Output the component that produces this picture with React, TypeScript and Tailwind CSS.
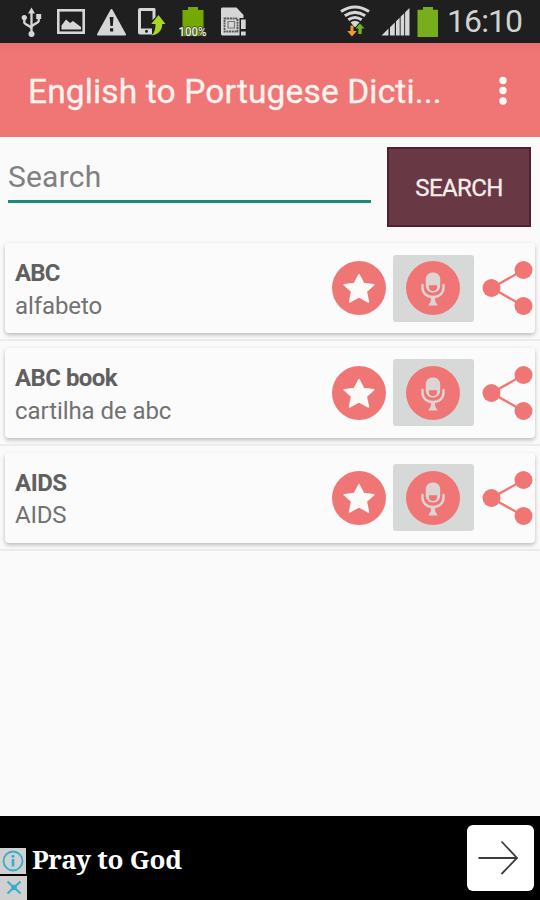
import React from "react";

const entries = [
  { word: "ABC", meaning: "alfabeto", wordCls: "tracking-[-0.9px]", meaningCls: "tracking-[-0.1px]" },
  { word: "ABC book", meaning: "cartilha de abc", wordCls: "tracking-[-0.55px]", meaningCls: "tracking-[-0.07px]" },
  { word: "AIDS", meaning: "AIDS", wordCls: "tracking-[-0.5px]", meaningCls: "tracking-[-0.2px]" },
];

function StatusBar() {
  return (
    <div className="flex h-[43px] shrink-0 bg-[#1e1f1e]">
      <svg width="446" height="43" viewBox="0 0 446 43" className="shrink-0">
        {/* usb */}
        <g stroke="#d6d6d6" strokeWidth="2.300" fill="none">
          <path d="M31.500 12v21M24.300 18v4.500c0 2.500 7.200 3 7.200 6.500M38.700 18v3c0 2.500-7.200 3-7.200 6.500" />
        </g>
        <path d="M31.500 7.500l3.500 6h-7z" fill="#d6d6d6" />
        <circle cx="31.500" cy="34" r="3" fill="#d6d6d6" />
        <circle cx="24.300" cy="17.500" r="2.600" fill="#d6d6d6" />
        <path d="M36.200 14h5v5h-5z" fill="#d6d6d6" />
        {/* picture */}
        <rect x="58.300" y="10.300" width="25.400" height="22.400" fill="none" stroke="#d6d6d6" strokeWidth="2.600" />
        <path d="M61.500 29.500v-4l4.500-6 4 3.500 3-2 8 6v2.500z" fill="#d6d6d6" />
        {/* warning */}
        <path d="M111.500 10l13.500 24.500H98z" fill="#d6d6d6" stroke="#d6d6d6" strokeWidth="2" strokeLinejoin="round" />
        <path d="M109.700 17h3.800l-.7 9h-2.400zM110 28.300h3.200v3.200H110z" fill="#1e1f1e" />
        {/* phone with arrow */}
        <path d="M155.500 17V9.500c0-1-.5-1.500-1.500-1.500H140c-1 0-2 .8-2 2v22.500c0 1.200.8 2 2 2h12v-6h-11V11h11.500v9z" fill="#d6d6d6" />
        <circle cx="146.500" cy="31.300" r="1.500" fill="#1e1f1e" />
        <path d="M158.500 15l7 9h-3.300c0 6.500-4 10.500-10.700 11.500 3-3 4-6.500 4-11.500h-4.300z" fill="#a6d81c" />
        {/* battery with level */}
        <path d="M188 7h10v3h5.500v26h-21V10h5.500z" fill="#76a900" />
        <text x="178.500" y="35.500" textLength="28" lengthAdjust="spacingAndGlyphs" fontFamily="Roboto, sans-serif" fontSize="12" fontWeight="500" fill="#eeeeee" stroke="#35421c" strokeWidth="1.500" paintOrder="stroke">100%</text>
        {/* sim card alert */}
        <path d="M223 7.500h13.500l7 7.500v3.500h-3.500v12h3.500v5h-3.500H223c-1.500 0-2-.5-2-2v-24c0-1.500.5-2 2-2z" fill="#d6d6d6" />
        <path d="M224.500 18.500h13v13h-13z" fill="none" stroke="#555" strokeWidth="1.800" strokeDasharray="2 .7" />
        <path d="M228 21.500h6.500v6.500H228z" fill="none" stroke="#777" strokeWidth="1.200" />
        <path d="M239.500 18h7.500v19h-7.500z" fill="#1e1f1e" />
        <path d="M241 19.500h4.700v9.500H241zM241 31.500h4.700v4H241z" fill="#d6d6d6" />
        {/* wifi */}
        <g fill="none" stroke="#d6d6d6" strokeWidth="3">
          <path d="M341 11.500q14-9 28 0M344.800 15.800q10.200-6.800 20.400 0M348.300 19.800q6.700-4.700 13.400 0" />
        </g>
        <path d="M350.500 22.300q4.500-3 9 0L355.500 27h-1z" fill="#d6d6d6" />
        <path d="M350.500 25.500h3v5.500h3.300l-4.800 5.500-4.800-5.500h3.300z" fill="#ef9a32" />
        <path d="M360 23.500l4.500 5h-2.800v5.500h-3.400V28.500h-2.800z" fill="#6db51d" />
        {/* signal */}
        <path d="M381.500 35.500l7-7v7zM390 27.300l4.800-4.800v13H390zM396 21.300l3.700-3.600v17.800H396zM400.600 16.800l3.600-3.600v22.300h-3.600zM405.100 12.300l4.400-4.200v27.400h-4.400z" fill="#d6d6d6" />
        {/* battery */}
        <path d="M423 7h10v2.800h5V37h-20.500V9.800h5.500z" fill="#78ad1c" />
      </svg>
      <span className="mt-[2px] ml-[1px] whitespace-nowrap text-[32px] leading-[38px] tracking-[-0.9px] text-[#d2d2d2]">16:10</span>
    </div>
  );
}

function StarBadge() {
  return (
    <svg width="54" height="54" viewBox="0 0 54 54" className="shrink-0">
      <circle cx="27" cy="27" r="27" fill="#f07675" />
      <path d="M27 13.500l4.600 8.900 10.200 1.300-7.500 6.800 2.200 10.500-9.500-5.200-9.500 5.200 2.200-10.500-7.500-6.800 10.200-1.300z" fill="#fcf9f9" stroke="#fcf9f9" strokeWidth="1.500" strokeLinejoin="round" />
    </svg>
  );
}

function MicButton() {
  return (
    <div className="ml-[7px] flex h-[67px] w-[81px] shrink-0 items-center justify-center rounded-[3px] bg-[#d7d9d8]">
      <svg width="54" height="54" viewBox="0 0 54 54" className="mr-px">
        <circle cx="27" cy="27" r="27" fill="#f07675" />
        <rect x="19.800" y="11.500" width="14.400" height="20" rx="6.500" fill="#dcd5d3" />
        <path d="M22.900 24.300h8.200v1.700c0 2.500-1.500 4-4.100 4s-4.100-1.500-4.100-4z" fill="#ee7574" />
        <path d="M16.500 24v2.500c0 5.500 4 9.500 10.500 9.500s10.500-4 10.500-9.500V24" fill="none" stroke="#dcd5d3" strokeWidth="2.400" strokeLinecap="round" />
        <path d="M24.900 36h4.200v4l2.500 4.500h-9.200l2.500-4.500z" fill="#dcd5d3" />
      </svg>
    </div>
  );
}

function ShareIcon() {
  return (
    <svg width="51" height="54" viewBox="0 0 51 54" className="ml-[8px] shrink-0">
      <path d="M41.500 9L9.500 27l32 18" fill="none" stroke="#f07675" strokeWidth="2.300" />
      <circle cx="41.500" cy="9" r="9" fill="#f07675" />
      <circle cx="9.500" cy="27" r="9" fill="#f07675" />
      <circle cx="41.500" cy="45" r="9" fill="#f07675" />
    </svg>
  );
}

export default function App() {
  return (
    <div className="flex h-[900px] w-[540px] flex-col overflow-hidden bg-[#fafafa] font-[Roboto,sans-serif]">
      <StatusBar />
      <header className="flex h-[94px] shrink-0 items-center justify-between bg-linear-to-b from-[#e97172] to-[#f07675] to-[12px] pr-[32px] pl-[28px]">
        <h1 className="mt-[3px] whitespace-nowrap text-[33.500px] leading-[40px] tracking-[0.14px] text-[#fff3f0] [-webkit-text-stroke:0.3px_#fff3f0]">English to Portugese Dicti...</h1>
        <svg width="10" height="30" viewBox="0 0 10 30">
          <circle cx="5" cy="5.500" r="3.700" fill="#fffafa" />
          <circle cx="5" cy="15.500" r="3.700" fill="#fffafa" />
          <circle cx="5" cy="26" r="3.700" fill="#fffafa" />
        </svg>
      </header>
      <div className="flex h-[99.700px] shrink-0 items-start pt-[10px] pr-[9px] pl-[8px]">
        <div className="h-[56px] w-[363px] border-b-[3px] border-[#1b8c7b] pt-[11px] text-[30px] leading-[38px] tracking-[0.2px] text-[#808080]">
          <span className="whitespace-nowrap">Search</span>
        </div>
        <button className="ml-[16px] h-[80px] w-[144px] border-2 border-[#541f30] bg-[#683844] pt-[2px] text-[24px] tracking-[-0.6px] text-[#f8ecec]">
          <span className="whitespace-nowrap [-webkit-text-stroke:0.3px_#f8ecec]">SEARCH</span>
        </button>
      </div>
      <main className="flex grow flex-col">
        {entries.map((e) => (
          <div key={e.word} className="h-[104.700px] border-b-2 border-[#ececec] px-[5px] pt-[6.500px]">
            <div className="flex h-[90px] items-center rounded-[4px] bg-[#fbfbfb] pr-[2px] pl-[10px] shadow-[0_2px_4px_rgba(0,0,0,0.26)]">
              <div className="flex grow flex-col pt-[3.500px] text-[24px] leading-[32.500px] text-[#727272]">
                <span className={"whitespace-nowrap font-bold text-[#606060] " + e.wordCls}>{e.word}</span>
                <span className={"whitespace-nowrap " + e.meaningCls}>{e.meaning}</span>
              </div>
              <StarBadge />
              <MicButton />
              <ShareIcon />
            </div>
          </div>
        ))}
      </main>
      <footer className="flex h-[84px] shrink-0 bg-black">
        <div className="flex w-[27px] flex-col justify-end gap-[2px]">
          <div className="flex h-[26px] w-[26px] items-center justify-center bg-[#d0d0d0]">
            <svg width="22" height="22" viewBox="0 0 22 22">
              <circle cx="11" cy="11" r="9.500" fill="none" stroke="#35aecb" strokeWidth="1.800" />
              <path d="M11 9v7.500" fill="none" stroke="#35aecb" strokeWidth="2.600" />
              <circle cx="11" cy="6.200" r="1.500" fill="#35aecb" />
            </svg>
          </div>
          <div className="flex h-[24px] w-[27px] items-center justify-center bg-[#d0d0d0]">
            <svg width="16" height="16" viewBox="0 0 16 16">
              <path d="M1.500 1.500l13 12M14.500 1.500l-13 12" stroke="#35aecb" strokeWidth="2" />
              <circle cx="8" cy="7.500" r="2.800" fill="#35aecb" />
            </svg>
          </div>
        </div>
        <div className="ml-[5px] grow pt-[25px] font-['Noto_Serif','DejaVu_Serif',serif] text-[26px] leading-[36px] font-bold tracking-[-0.25px] text-white">
          <span className="whitespace-nowrap">Pray to God</span>
        </div>
        <div className="mt-[9px] mr-[6px] flex h-[66px] w-[67px] items-center justify-center rounded-[6px] bg-white">
          <svg width="42" height="36" viewBox="0 0 42 36" className="mr-[5px]">
            <path d="M1.500 18h37.500M24.500 1.500L40 18 24.500 34" fill="none" stroke="#3c3c3c" strokeWidth="1.800" />
          </svg>
        </div>
      </footer>
    </div>
  );
}
